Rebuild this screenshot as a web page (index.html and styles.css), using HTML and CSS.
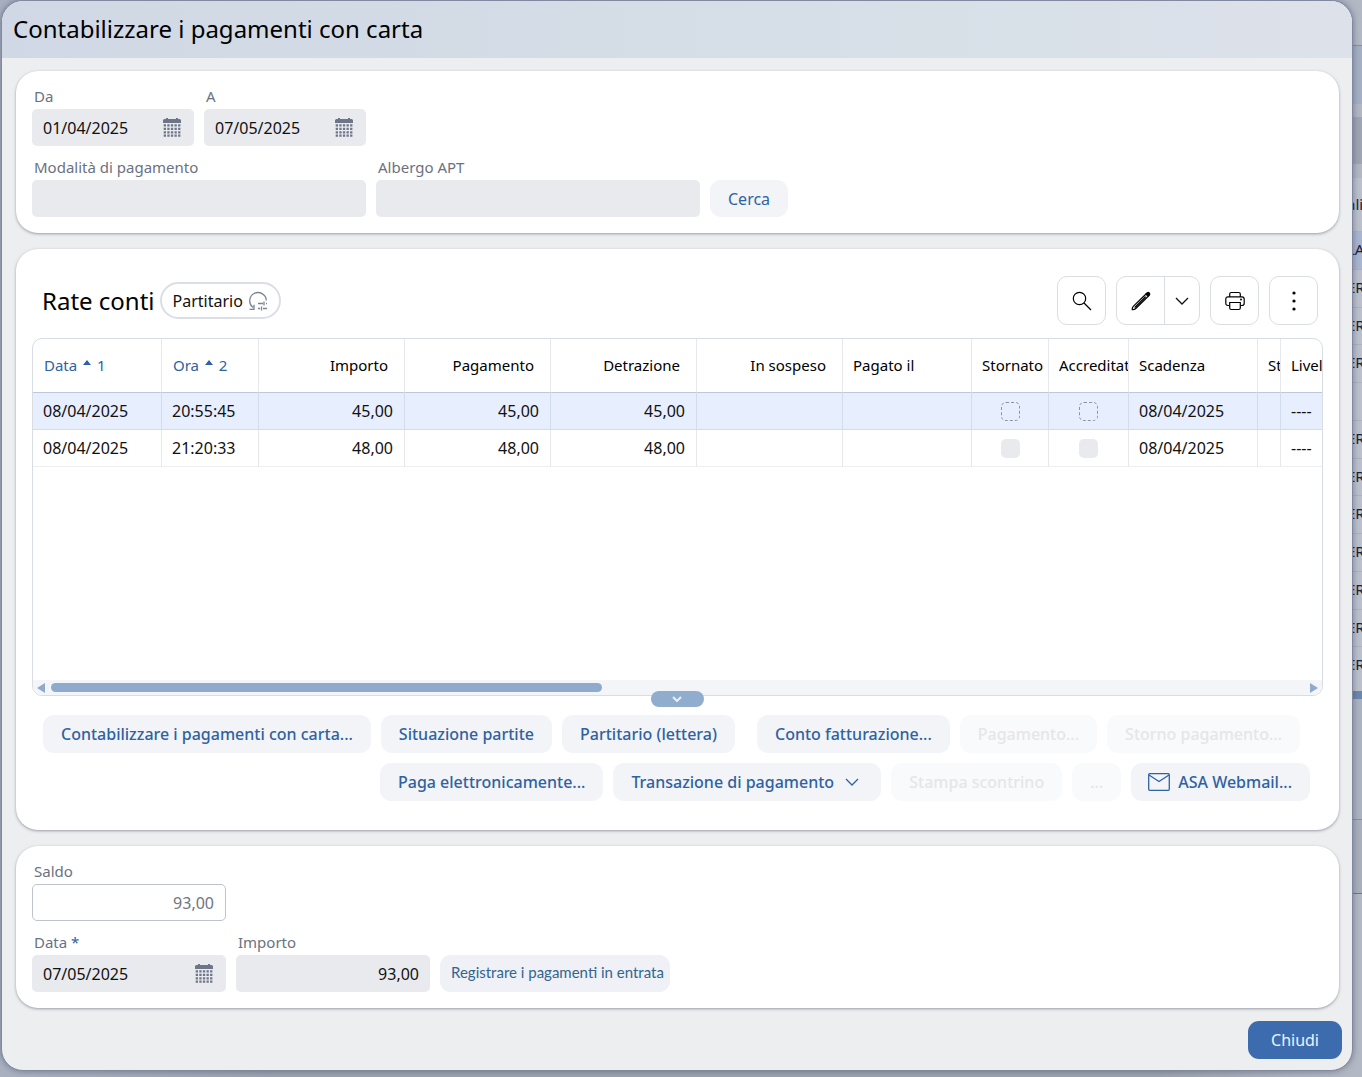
FILE: index.html
```
<!DOCTYPE html>
<html lang="it">
<head>
    <meta charset="UTF-8">
    <meta name="viewport" content="width=device-width, initial-scale=1.0">
    <title>Contabilizzare i pagamenti con carta</title>
    <link rel="stylesheet" href="styles.css">
</head>
<body>
    <!-- shared icons -->
    <svg class="sprite" aria-hidden="true">
        <symbol id="calendar" viewBox="0 0 18 19">
            <path fill="#6d7589" d="M0 2.500q0-1.500 1.500-1.500H3V0h2v1h8V0h2v1h1.500Q18 1 18 2.500V5H0z"/>
            <path stroke="#6d7589" stroke-width="2.300" stroke-dasharray="2.300 1.300" d="M.7 7.300h16.700M.7 10.900h16.700M.7 14.300h16.700M.7 17.700h16.700"/>
        </symbol>
        <symbol id="chevron" viewBox="0 0 14 8">
            <path fill="none" stroke="currentColor" stroke-width="1.300" d="M1 1l6 6 6-6"/>
        </symbol>
    </svg>

    <div class="backdrop" aria-hidden="true">
        <div class="bg-page">
            <div class="bg-title"></div>
            <div class="bg-filter"><span></span></div>
            <div class="bg-head">ali</div>
            <div class="bg-rows">
                <div class="selected">LA</div>
                <div>ER</div>
                <div>ER</div>
                <div>ER</div>
                <div></div>
                <div>ER</div>
                <div>ER</div>
                <div>ER</div>
                <div>ER</div>
                <div>ER</div>
                <div>ER</div>
                <div>ER</div>
            </div>
            <div class="bg-scroll"></div>
            <div class="bg-buttons"></div>
            <div class="bg-foot"></div>
        </div>
    </div>

    <main class="dialog">
        <header class="dialog-header">
            <h1>Contabilizzare i pagamenti con carta</h1>
        </header>

        <div class="dialog-body">
            <form class="panel form">
                <div class="form-row">
                    <div class="field w-date">
                        <label for="da">Da</label>
                        <div class="input-box">
                            <input id="da" type="text" value="01/04/2025">
                            <button type="button" class="cal" aria-label="Calendario"><svg width="18" height="19"><use href="#calendar"/></svg></button>
                        </div>
                    </div>
                    <div class="field w-date">
                        <label for="a">A</label>
                        <div class="input-box">
                            <input id="a" type="text" value="07/05/2025">
                            <button type="button" class="cal" aria-label="Calendario"><svg width="18" height="19"><use href="#calendar"/></svg></button>
                        </div>
                    </div>
                </div>
                <div class="form-row">
                    <div class="field w-mode">
                        <label for="modalita">Modalità di pagamento</label>
                        <div class="input-box"><input id="modalita" type="text"></div>
                    </div>
                    <div class="field w-hotel">
                        <label for="albergo">Albergo APT</label>
                        <div class="input-box"><input id="albergo" type="text"></div>
                    </div>
                    <button type="button" class="btn">Cerca</button>
                </div>
            </form>

            <section class="panel list">
                <div class="list-header">
                    <h2>Rate conti</h2>
                    <button class="chip">Partitario
                        <svg width="20" height="20" viewBox="0 0 20 20" fill="none" stroke="#7c8494" stroke-width="1.300">
                            <path d="M18.300 9.500A8.300 8.300 0 1 0 5 16.500M1.500 18.300H6v-4.500M10 12.500h5M18 12.500h1M16 10.500v4M10 17.500h2M15 17.500h4M13.500 15.500v4"/>
                        </svg>
                    </button>
                    <div class="tools">
                        <button class="tool" aria-label="Cerca">
                            <svg width="20" height="20" viewBox="0 0 20 20" fill="none" stroke="#000" stroke-width="1.200"><circle cx="7.500" cy="7.500" r="6.200"/><path d="M12 12l7 7"/></svg>
                        </button>
                        <div class="split">
                            <button aria-label="Modifica">
                                <svg width="20" height="20" viewBox="0 0 20 20" fill="none" stroke="#000" stroke-width="1.200" stroke-linejoin="round" stroke-linecap="round"><path d="M1.200 18.700q-.2-2.200 1.300-3.600L15 3l2.200 2.200L4.800 17.500q-1.400 1.400-3.600 1.200zM4 16.200L14.300 6"/><path fill="#000" d="M15 3l1.300-1.200q1-.7 2 .1.900 1 .2 2.100L17.200 5.200z"/></svg>
                            </button>
                            <button class="split-more" aria-label="Altre azioni"><svg width="14" height="8"><use href="#chevron"/></svg></button>
                        </div>
                        <button class="tool" aria-label="Stampa">
                            <svg width="20" height="20" viewBox="0 0 20 20" fill="none" stroke="#000" stroke-width="1.200"><path d="M4.700 5.500V3q0-1.500 1.500-1.500h7.600q1.500 0 1.500 1.500v2.500M4.500 14.500H3q-2.200 0-2.200-2.200V8.200Q.8 5.800 3 5.800h14q2.200 0 2.200 2.400v4.100q0 2.200-2.200 2.200h-1.500"/><path d="M4.700 11.500h10.600V17q0 1.500-1.500 1.500H6.200q-1.500 0-1.500-1.500z"/><circle cx="16" cy="8.500" r=".4" fill="#000"/></svg>
                        </button>
                        <button class="tool" aria-label="Menu">
                            <svg width="4" height="20" viewBox="0 0 4 20"><circle cx="2" cy="2" r="1.600"/><circle cx="2" cy="10" r="1.600"/><circle cx="2" cy="18" r="1.600"/></svg>
                        </button>
                    </div>
                </div>

                <div class="grid">
                    <div class="grid-view">
                        <table>
                            <colgroup>
                                <col class="c-date"><col class="c-time">
                                <col class="c-num"><col class="c-num"><col class="c-num"><col class="c-num">
                                <col class="c-date"><col class="c-check"><col class="c-check2">
                                <col class="c-date"><col class="c-mini"><col class="c-level">
                            </colgroup>
                            <thead>
                                <tr>
                                    <th class="sorted">Data <svg width="8" height="5"><path d="M0 5l4-5 4 5z"/></svg> 1</th>
                                    <th class="sorted">Ora <svg width="8" height="5"><path d="M0 5l4-5 4 5z"/></svg> 2</th>
                                    <th class="num">Importo</th>
                                    <th class="num">Pagamento</th>
                                    <th class="num">Detrazione</th>
                                    <th class="num">In sospeso</th>
                                    <th>Pagato il</th>
                                    <th>Stornato</th>
                                    <th>Accreditato</th>
                                    <th>Scadenza</th>
                                    <th>Stato</th>
                                    <th>Livello</th>
                                </tr>
                            </thead>
                            <tbody>
                                <tr class="selected">
                                    <td>08/04/2025</td><td>20:55:45</td>
                                    <td class="num">45,00</td><td class="num">45,00</td><td class="num">45,00</td>
                                    <td></td><td></td>
                                    <td class="check"><input type="checkbox" aria-label="Stornato"></td>
                                    <td class="check"><input type="checkbox" aria-label="Accreditato"></td>
                                    <td>08/04/2025</td><td></td><td>----</td>
                                </tr>
                                <tr>
                                    <td>08/04/2025</td><td>21:20:33</td>
                                    <td class="num">48,00</td><td class="num">48,00</td><td class="num">48,00</td>
                                    <td></td><td></td>
                                    <td class="check"><input type="checkbox" aria-label="Stornato"></td>
                                    <td class="check"><input type="checkbox" aria-label="Accreditato"></td>
                                    <td>08/04/2025</td><td></td><td>----</td>
                                </tr>
                            </tbody>
                        </table>
                    </div>
                    <div class="scrollbar">
                        <svg width="8" height="10"><path d="M8 0v10L0 5z"/></svg>
                        <div class="track"><div class="thumb"></div></div>
                        <svg width="8" height="10"><path d="M0 0v10l8-5z"/></svg>
                    </div>
                    <button class="expand" aria-label="Espandi"><svg width="10" height="6" viewBox="0 0 10 6"><path fill="none" stroke="#e9f0f8" stroke-width="2" d="M1 1l4 4 4-4"/></svg></button>
                </div>

                <div class="actions">
                    <div class="action-row first">
                        <button class="btn">Contabilizzare i pagamenti con carta...</button>
                        <button class="btn">Situazione partite</button>
                        <button class="btn group-end">Partitario (lettera)</button>
                        <button class="btn">Conto fatturazione...</button>
                        <button class="btn" disabled>Pagamento...</button>
                        <button class="btn" disabled>Storno pagamento...</button>
                    </div>
                    <div class="action-row">
                        <button class="btn">Paga elettronicamente...</button>
                        <button class="btn menu">Transazione di pagamento <svg width="14" height="8"><use href="#chevron"/></svg></button>
                        <button class="btn" disabled>Stampa scontrino</button>
                        <button class="btn" disabled>...</button>
                        <button class="btn mail"><svg width="22" height="18" viewBox="0 0 22 18" fill="none" stroke="currentColor" stroke-width="1.300"><rect x=".7" y=".7" width="20.600" height="16.600" rx="1"/><path d="M1 2l10 6.500L21 2"/></svg> ASA Webmail...</button>
                    </div>
                </div>
            </section>

            <form class="panel form">
                <div class="form-row">
                    <div class="field w-pay">
                        <label for="saldo">Saldo</label>
                        <div class="input-box readonly"><input id="saldo" class="num" type="text" value="93,00" readonly></div>
                    </div>
                </div>
                <div class="form-row">
                    <div class="field w-pay">
                        <label for="data">Data <span class="required">*</span></label>
                        <div class="input-box">
                            <input id="data" type="text" value="07/05/2025">
                            <button type="button" class="cal" aria-label="Calendario"><svg width="18" height="19"><use href="#calendar"/></svg></button>
                        </div>
                    </div>
                    <div class="field w-pay">
                        <label for="importo">Importo</label>
                        <div class="input-box"><input id="importo" class="num" type="text" value="93,00"></div>
                    </div>
                    <button type="button" class="btn register">Registrare i pagamenti in entrata</button>
                </div>
            </form>
        </div>

        <footer class="dialog-footer">
            <button class="btn primary">Chiudi</button>
        </footer>
    </main>
</body>
</html>
```

FILE: styles.css
```
* {
    box-sizing: border-box;
    margin: 0;
    padding: 0;
}

body {
    position: relative;
    min-height: 100vh;
    padding: 0 9px 6px 1px;
    font-family: 'Noto Sans', 'Open Sans', sans-serif;
    font-size: 16px;
    color: #111;
    display: flex;
    background: #a3aab9;
}

button,
input {
    font: inherit;
    color: inherit;
    border: none;
    background: none;
}

button {
    cursor: pointer;
}

.sprite {
    position: absolute;
    width: 0;
    height: 0;
}

/* page behind the dialog */
.backdrop {
    position: absolute;
    inset: 0;
    overflow: hidden;
    background: linear-gradient(to right, #a9b1c1, #9ca3b0 20%, #9ca3b0 85%, #b3b8c5);
}

.bg-page {
    margin-left: auto;
    width: 15px;
    margin-top: 45px;
    border-top: 1px solid #8690a3;
    font-size: 15px;
    line-height: 35px;
    color: #1c2233;
    background: #bbc0cc;
}

.bg-title {
    height: 58px;
    background: #a5afc3;
}

.bg-filter {
    padding: 13px 0 14px;
    background: #b2b7c1;
}

.bg-filter span {
    display: block;
    height: 47px;
    background: #9fa5b3;
}

.bg-head {
    height: 53px;
    line-height: 53px;
}

.bg-rows {
    display: flex;
    flex-direction: column;
    height: 453px;
}

.bg-rows div {
    flex: 1;
    border-top: 1px solid #acb2be;
    overflow: hidden;
}

.bg-rows .selected {
    background: #aab5cf;
}

.bg-scroll {
    height: 8px;
    margin-top: 7px;
    background: #6c87ad;
}

.bg-buttons {
    height: 121px;
    border-bottom: 1px solid #8a91a0;
    background: #acb3c0;
}

.bg-foot {
    height: 74px;
    border-bottom: 1px solid #6f788b;
    background: #a9b0bc;
}

/* dialog */
.dialog {
    position: relative;
    flex: 1;
    min-width: 0;
    display: flex;
    flex-direction: column;
    border: 1px solid #8089a0;
    border-radius: 22px;
    background: #edeef0;
    box-shadow: 0 0 6px rgba(50, 60, 85, 0.5);
    overflow: hidden;
}

.dialog-header {
    height: 57px;
    padding: 0 11px;
    background: linear-gradient(to right, #cfd8e4, #d8e0e8 75%, #dde1ea);
}

.dialog-header h1 {
    font-size: 24px;
    font-weight: 400;
    line-height: 56px;
    color: #000;
}

.dialog-body {
    flex: 1;
    display: flex;
    flex-direction: column;
    gap: 16px;
    padding: 13px 13px 0 14px;
}

.panel {
    background: #fff;
    border-radius: 22px;
    box-shadow: 0 1px 3px rgba(70, 75, 90, 0.5);
}

/* form panels */
.form {
    display: flex;
    flex-direction: column;
    gap: 9px;
    padding: 13px 16px 16px;
}

.form-row {
    display: flex;
    align-items: flex-end;
    gap: 10px;
}

.field label {
    display: block;
    padding-left: 2px;
    font-size: 15px;
    line-height: 25px;
    color: #6a7282;
}

.required {
    color: #2b5fa8;
}

.input-box {
    display: flex;
    align-items: center;
    height: 37px;
    padding: 0 11px;
    border-radius: 5px;
    background: #e9eaee;
}

.input-box input {
    flex: 1;
    width: 100%;
    min-width: 0;
    outline: none;
}

.input-box.readonly {
    border: 1px solid #bfc3cc;
    background: #fff;
    color: #6f7683;
}

.cal {
    display: flex;
    margin-right: 2px;
}

.num {
    text-align: right;
}

.w-date {
    width: 162px;
}

.w-mode {
    width: 334px;
}

.w-hotel {
    width: 324px;
}

.w-pay {
    width: 194px;
}

.btn {
    height: 37px;
    padding: 0 18px;
    border-radius: 11px;
    background: #f3f4f7;
    color: #2f62a2;
    white-space: nowrap;
}

.btn:disabled {
    background: #f9fafc;
    color: #e5e6e8;
    cursor: default;
}

.register {
    padding: 0 6px 4px 11px;
    font-family: 'Lato', sans-serif;
    font-size: 15px;
    background: #f0f1f6;
    color: #32658f;
}

/* list panel */
.list {
    padding: 27px 16px 29px;
}

.list-header {
    display: flex;
    align-items: center;
    padding: 0 5px 0 10px;
    margin-bottom: 13px;
}

.list-header h2 {
    font-size: 24px;
    font-weight: 400;
    color: #000;
}

.chip {
    display: flex;
    align-items: center;
    gap: 5px;
    height: 37px;
    margin-left: 5px;
    padding: 0 11px;
    border: 2px solid #dbdee4;
    border-radius: 19px;
}

.tools {
    display: flex;
    gap: 10px;
    margin-left: auto;
}

.tool,
.split {
    display: flex;
    align-items: center;
    justify-content: center;
    height: 49px;
    border: 1px solid #dadde2;
    border-radius: 10px;
}

.tool {
    width: 49px;
}

.split button {
    display: flex;
    align-items: center;
    justify-content: center;
    width: 47px;
    height: 100%;
}

.split .split-more {
    width: 35px;
    border-left: 1px solid #dadde2;
}

.grid {
    position: relative;
    border: 1px solid #d8dce3;
    border-radius: 10px;
}

.grid-view {
    height: 341px;
    overflow: hidden;
    border-radius: 10px 10px 0 0;
}

table {
    width: 100%;
    table-layout: fixed;
    border-collapse: separate;
    border-spacing: 0;
}

.c-date { width: 129px; }
.c-time { width: 97px; }
.c-num { width: 146px; }
.c-check { width: 77px; }
.c-check2 { width: 80px; }
.c-mini { width: 23px; }
.c-level { width: 66px; }

th,
td {
    padding: 0 0 0 10px;
    border-right: 1px solid #e6e8ec;
    text-align: left;
    white-space: nowrap;
    overflow: hidden;
}

th {
    height: 54px;
    padding-bottom: 2px;
    font-size: 15px;
    font-weight: 400;
    color: #000;
    border-bottom: 1px solid #c0c8d6;
}

th.sorted {
    padding-left: 11px;
    color: #2f62a2;
}

th svg {
    fill: #2f62a2;
    margin: 0 2px;
    vertical-align: 6px;
}

td {
    height: 37px;
    border-bottom: 1px solid #edeef0;
}

th.num {
    padding-right: 16px;
    text-align: right;
}

td.num {
    padding-right: 11px;
    text-align: right;
}

tr.selected td {
    background: #e7eefe;
    border-color: #d1dcec;
}

td.check {
    padding: 0 0 2px;
    text-align: center;
}

td input {
    appearance: none;
    width: 19px;
    height: 19px;
    border-radius: 5px;
    background: #e9eaee;
    vertical-align: middle;
}

tr.selected input {
    border: 1px dashed #8b93a5;
    background: none;
}

.scrollbar {
    display: flex;
    align-items: center;
    gap: 6px;
    height: 15px;
    padding: 0 4px;
    border-radius: 0 0 10px 10px;
    background: #f3f5f8;
    fill: #8eabcd;
}

.track {
    flex: 1;
}

.thumb {
    width: 44%;
    height: 9px;
    border-radius: 5px;
    background: #8eabcd;
}

.expand {
    position: absolute;
    left: 50%;
    bottom: -12px;
    display: flex;
    align-items: center;
    justify-content: center;
    width: 53px;
    height: 16px;
    margin-left: -27px;
    border-radius: 8px;
    background: #90adce;
}

.actions {
    display: flex;
    flex-direction: column;
    gap: 10px;
    padding: 19px 13px 0 0;
}

.action-row {
    display: flex;
    flex-wrap: wrap;
    justify-content: flex-end;
    gap: 10px;
}

.action-row.first {
    padding-right: 10px;
}

.action-row .btn,
.primary {
    height: 38px;
}

.action-row .btn {
    font-weight: 500;
}

.group-end {
    margin-right: 12px;
}

.menu svg {
    margin: 0 4px 2px 7px;
}

.mail {
    display: flex;
    align-items: center;
    gap: 8px;
    padding-left: 17px;
}

.dialog-footer {
    display: flex;
    justify-content: flex-end;
    padding: 13px 10px 11px;
}

.primary {
    padding: 0 23px;
    background: #3c6cad;
    color: #edf3fb;
}
```
